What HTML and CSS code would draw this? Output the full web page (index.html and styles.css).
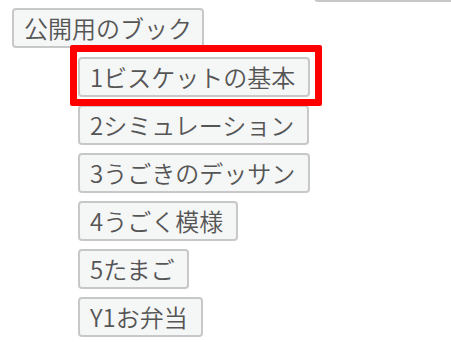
FILE: index.html
```html
<!DOCTYPE html>
<html lang="ja">
<head>
<meta charset="utf-8">
<title>公開用のブック</title>
<link rel="stylesheet" href="styles.css">
</head>
<body>
<div class="page">
  <div class="topbar"><span class="btn ghost">&nbsp;</span></div>
  <div class="root"><span class="btn">公開用のブック</span></div>
  <ul class="books">
    <li><span class="btn">1ビスケットの基本</span></li>
    <li><span class="btn">2シミュレーション</span></li>
    <li><span class="btn">3うごきのデッサン</span></li>
    <li><span class="btn">4うごく模様</span></li>
    <li><span class="btn">5たまご</span></li>
    <li><span class="btn">Y1お弁当</span></li>
  </ul>
  <div class="highlight"></div>
</div>
</body>
</html>
```

FILE: styles.css
```css
html, body {
  margin: 0;
  padding: 0;
  background: #ffffff;
  overflow: hidden;
}

.page {
  position: relative;
  width: 451px;
  height: 342px;
  font-family: "Noto Sans CJK JP", "Noto Sans", sans-serif;
  font-size: 24px;
  font-weight: 350;
  color: #555555;
}

.topbar {
  display: flex;
  justify-content: flex-end;
  height: 0;
}

.btn {
  display: inline-block;
  box-sizing: border-box;
  height: 40px;
  line-height: 36px;
  padding: 0 10px;
  border: 2px solid #c8c8c8;
  border-radius: 4px;
  background: #f5f6f6;
  white-space: nowrap;
}

.ghost {
  width: 137px;
  margin-top: -38px;
  border-right: none;
  border-radius: 4px 0 0 4px;
}

.root {
  padding: 8px 0 0 12px;
}

.books {
  list-style: none;
  margin: 9px 0 0 78px;
  padding: 0;
  display: flex;
  flex-direction: column;
  align-items: flex-start;
  gap: 8px;
}

.books li {
  display: flex;
}

.books .btn {
  padding-right: 13px;
}

.highlight {
  position: absolute;
  left: 70px;
  top: 45px;
  width: 252px;
  height: 61px;
  box-sizing: border-box;
  border: 7px solid #ff0000;
  border-radius: 2px;
}
```
